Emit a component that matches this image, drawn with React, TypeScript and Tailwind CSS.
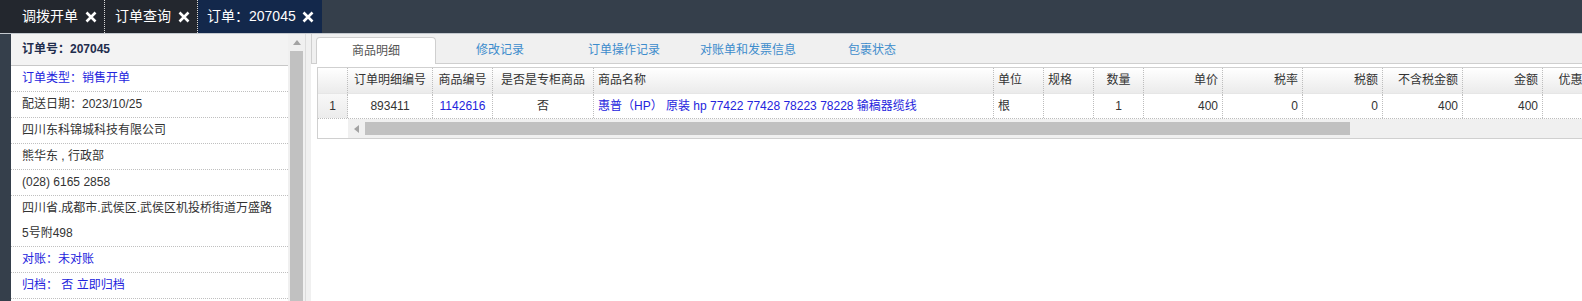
import React from 'react';

const BLUE = 'text-[#2424dd]';

const CloseIcon: React.FC = () => (
  <svg width="12" height="12" viewBox="0 0 12 12" className="shrink-0">
    <path d="M1.5 1.5 L10.5 10.5 M10.5 1.5 L1.5 10.5" stroke="#ffffff" strokeWidth="2.6" fill="none" />
  </svg>
);

interface TopTabProps {
  label: string;
  active?: boolean;
}

const TopTab: React.FC<TopTabProps> = ({ label, active }) => (
  <div
    className={
      active
        ? 'flex h-full items-center gap-[6px] bg-[#13284b] pl-[9px] pr-[8px] text-[14px] text-white'
        : 'flex h-full items-center gap-[7px] border-r border-dotted border-[#d8d8d8] pl-[10px] pr-[7px] text-[14px] text-white'
    }
  >
    <span className="leading-[33px]">{label}</span>
    <CloseIcon />
  </div>
);

const infoRows: { text: React.ReactNode; blue?: boolean }[] = [
  { text: '订单类型：销售开单', blue: true },
  { text: '配送日期：2023/10/25' },
  { text: '四川东科锦城科技有限公司' },
  { text: '熊华东 , 行政部' },
  { text: '(028) 6165 2858' },
  {
    text: (
      <>
        四川省.成都市.武侯区.武侯区机投桥街道万盛路
        <br />
        5号附498
      </>
    ),
  },
  { text: '对账：未对账', blue: true },
  { text: '归档： 否 立即归档', blue: true },
];

type Align = 'left' | 'center' | 'right';

interface Column {
  title: string;
  width: string;
  head: Align;
  body: Align;
  value: string;
  blue?: boolean;
}

const columns: Column[] = [
  { title: '', width: 'w-[30px]', head: 'center', body: 'center', value: '1' },
  { title: '订单明细编号', width: 'w-[85px]', head: 'center', body: 'center', value: '893411' },
  { title: '商品编号', width: 'w-[60px]', head: 'center', body: 'center', value: '1142616', blue: true },
  { title: '是否是专柜商品', width: 'w-[101px]', head: 'center', body: 'center', value: '否' },
  {
    title: '商品名称',
    width: 'w-[400px]',
    head: 'left',
    body: 'left',
    value: '惠普（HP） 原装 hp 77422 77428 78223 78228 输稿器缆线',
    blue: true,
  },
  { title: '单位', width: 'w-[50px]', head: 'left', body: 'left', value: '根' },
  { title: '规格', width: 'w-[50px]', head: 'left', body: 'left', value: '' },
  { title: '数量', width: 'w-[50px]', head: 'center', body: 'center', value: '1' },
  { title: '单价', width: 'w-[79px]', head: 'right', body: 'right', value: '400' },
  { title: '税率', width: 'w-[80px]', head: 'right', body: 'right', value: '0' },
  { title: '税额', width: 'w-[80px]', head: 'right', body: 'right', value: '0' },
  { title: '不含税金额', width: 'w-[80px]', head: 'right', body: 'right', value: '400' },
  { title: '金额', width: 'w-[80px]', head: 'right', body: 'right', value: '400' },
  { title: '优惠金额', width: 'w-[80px]', head: 'center', body: 'right', value: '' },
];

const alignClass: Record<Align, string> = {
  left: 'text-left',
  center: 'text-center',
  right: 'text-right',
};

const subTabs = ['商品明细', '修改记录', '订单操作记录', '对账单和发票信息', '包裹状态'];

export default function App() {
  return (
    <div className="h-[301px] w-[1582px] overflow-hidden bg-[#f0f0f0] font-['Liberation_Sans','Noto_Sans_CJK_SC',sans-serif] text-[12px] text-[#333]">
      {/* top tab bar */}
      <div className="flex h-[34px] border-b border-[#c4c9cf] bg-[#353f4b]">
        <div className="flex h-full bg-[#23272e] pl-[12px]">
          <TopTab label="调拨开单" />
          <TopTab label="订单查询" />
        </div>
        <TopTab label="订单：207045" active />
      </div>

      <div className="flex h-[267px]">
        <div className="w-[11px] shrink-0 bg-[#353f4b]" />

        {/* left order panel */}
        <div className="flex w-[295px] shrink-0 border-r border-[#dcdcdc]">
          <div className="w-[277px] bg-white">
            <div className="h-[32px] border-b border-[#c8c8c8] bg-[#f3f3f3] pl-[11px] font-bold leading-[31px] text-[#1f2d4d]">
              订单号：207045
            </div>
            {infoRows.map((row, i) => (
              <div
                key={i}
                className={`border-b border-dotted border-[#c0c0c0] px-[11px] leading-[25px] ${row.blue ? BLUE : ''}`}
              >
                {row.text}
              </div>
            ))}
          </div>
          <div className="flex w-[17px] flex-col bg-[#f0f0f0]">
            <div className="flex h-[17px] items-center justify-center">
              <svg width="8" height="5" viewBox="0 0 8 5">
                <path d="M4 0 L8 5 L0 5 Z" fill="#a3a3a3" />
              </svg>
            </div>
            <div className="ml-[2px] w-[13px] flex-1 bg-[#c1c1c1]" />
          </div>
        </div>

        {/* right detail panel */}
        <div className="ml-[5px] min-w-0 flex-1 bg-white">
          <div className="flex h-[30px] items-end gap-[4px] border-b border-l border-[#cfcfcf] bg-[#f0f0f0] pl-[4px]">
            {subTabs.map((t, i) =>
              i === 0 ? (
                <div
                  key={t}
                  className="-mb-px flex h-[27px] w-[120px] items-center justify-center rounded-t-[4px] border border-b-0 border-[#cfcfcf] bg-white text-[#555]"
                >
                  {t}
                </div>
              ) : (
                <div key={t} className="flex h-[27px] w-[120px] items-center justify-center text-[#3d8ccc]">
                  {t}
                </div>
              ),
            )}
          </div>

          <div className="pl-[6px] pt-[3px]">
            <div className="w-max border border-r-0 border-[#d0d0d0]">
              {/* header */}
              <div className="flex h-[26px] border-b border-[#e6e6e6] bg-gradient-to-b from-white to-[#ebebeb]">
                {columns.map((c, i) => (
                  <div
                    key={i}
                    className={`${c.width} ${alignClass[c.head]} shrink-0 truncate border-r border-dotted border-[#bdbdbd] px-[4px] leading-[25px]`}
                  >
                    {c.title}
                  </div>
                ))}
              </div>
              {/* data row */}
              <div className="flex h-[25px] border-b border-dotted border-[#bdbdbd]">
                {columns.map((c, i) => (
                  <div
                    key={i}
                    className={`${c.width} ${alignClass[c.body]} shrink-0 truncate border-r border-dotted border-[#bdbdbd] px-[4px] leading-[24px] ${
                      c.blue ? BLUE : ''
                    } ${i === 0 ? 'bg-gradient-to-b from-[#f8f8f8] to-[#ececec]' : ''}`}
                  >
                    {c.value}
                  </div>
                ))}
              </div>
              {/* horizontal scrollbar */}
              <div className="flex h-[19px]">
                <div className="w-[30px] shrink-0 bg-white" />
                <div className="flex flex-1 items-center bg-[#f0f0f0]">
                  <div className="flex w-[17px] shrink-0 items-center justify-center">
                    <svg width="5" height="8" viewBox="0 0 5 8">
                      <path d="M0 4 L5 0 L5 8 Z" fill="#a3a3a3" />
                    </svg>
                  </div>
                  <div className="h-[13px] w-[985px] shrink-0 bg-[#c1c1c1]" />
                </div>
              </div>
            </div>
          </div>
        </div>
      </div>
    </div>
  );
}
